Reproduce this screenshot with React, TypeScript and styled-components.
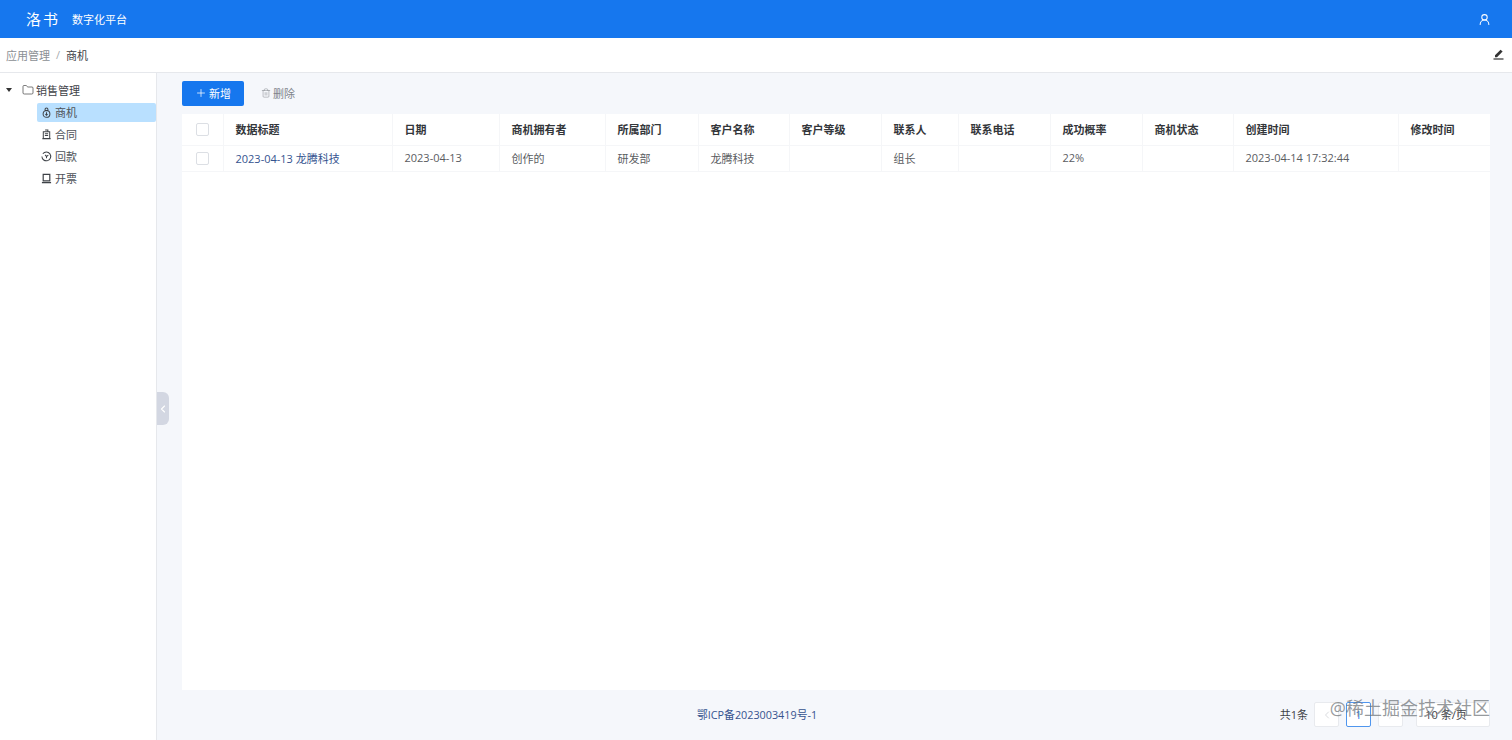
import React from 'react';
import styled, { createGlobalStyle } from 'styled-components';
import { ChevronLeft, ChevronRight, Folder, Plus, Trash2, UserRound } from 'lucide-react';

const GlobalStyle = createGlobalStyle`
  html, body { margin: 0; padding: 0; height: 100%; }
  body {
    font-family: "Open Sans", "Noto Sans CJK SC", sans-serif;
    font-size: 11px;
    color: #4e5359;
    background: #f5f7fb;
  }
  * { box-sizing: border-box; }
`;

const Page = styled.div`
  position: relative;
  display: flex;
  flex-direction: column;
  width: 1512px;
  height: 740px;
  overflow: hidden;
`;

// 顶部导航
const TopBar = styled.header`
  display: flex;
  align-items: center;
  height: 38px;
  flex: none;
  padding: 0 21px 0 26px;
  background: #1677ee;
  color: #fff;
`;

const LogoText = styled.span`
  font-size: 15px;
  letter-spacing: 2px;
  line-height: 1;
`;

const PlatformName = styled.span`
  margin-left: 12px;
  font-size: 11px;
  margin-bottom: 1px;
`;

const TopBarRight = styled.div`
  display: flex;
  margin-left: auto;
`;

const Crumbs = styled.div`
  display: flex;
  align-items: center;
  flex: none;
  height: 35px;
  padding: 0 8px 1px 6px;
  background: #fff;
  border-bottom: 1px solid #e6e8ec;
`;

const CrumbLink = styled.span`
  color: #8b8f94;
`;

const CrumbSep = styled.span`
  margin: 0 6px;
  color: #a8acb0;
`;

const CrumbCurrent = styled.span`
  color: #3e4247;
`;

const EditButton = styled.span`
  display: flex;
  margin-left: auto;
`;

const Body = styled.div`
  display: flex;
  flex: 1;
  min-height: 0;
`;

// 左侧树
const Sidebar = styled.aside`
  position: relative;
  flex: none;
  width: 157px;
  padding-top: 6px;
  background: #fff;
  border-right: 1px solid #e6e8ec;
`;

const TreeRoot = styled.div`
  display: flex;
  align-items: center;
  height: 22px;
  margin-bottom: 2px;
  padding-left: 6px;
  color: #3e4247;
`;

const Caret = styled.span`
  width: 0;
  height: 0;
  margin-right: 10px;
  border-left: 3px solid transparent;
  border-right: 3px solid transparent;
  border-top: 4px solid #333;
`;

const TreeRootLabel = styled.span`
  margin-left: 2px;
`;

const TreeItem = styled.div<{ $active?: boolean }>`
  display: flex;
  align-items: center;
  gap: 3px;
  height: 19px;
  margin: 0 0 3px 37px;
  padding: 0 0 1px 4px;
  border-radius: 2px;
  background: ${(p) => (p.$active ? '#b9e0ff' : 'transparent')};
  color: #4e5359;
`;

const CollapseHandle = styled.div`
  position: absolute;
  top: 319px;
  right: -13px;
  display: flex;
  align-items: center;
  justify-content: center;
  width: 12px;
  height: 33px;
  border-radius: 0 6px 6px 0;
  background: #d3d7e2;
  color: #fff;
`;

const Main = styled.main`
  display: flex;
  flex-direction: column;
  flex: 1;
  min-width: 0;
  padding: 8px 22px 0 25px;
`;

const Toolbar = styled.div`
  display: flex;
  align-items: center;
  flex: none;
  height: 25px;
  margin-bottom: 8px;
`;

const PrimaryButton = styled.button`
  display: flex;
  align-items: center;
  justify-content: center;
  gap: 2px;
  width: 62px;
  height: 25px;
  padding: 0 0 1px;
  border: none;
  border-radius: 2px;
  background: #1677ee;
  color: #fff;
  font: inherit;
`;

const GhostButton = styled.button`
  display: flex;
  align-items: center;
  gap: 2px;
  margin-left: 17px;
  padding: 0 0 1px;
  border: none;
  background: none;
  color: #80848a;
  font: inherit;
`;

const TableCard = styled.div`
  flex: none;
  height: 576px;
  background: #fff;
`;

const Grid = styled.table`
  width: 1308px;
  border-collapse: collapse;
  table-layout: fixed;
`;

const HeadCell = styled.th<{ $check?: boolean }>`
  height: 31px;
  padding: ${(p) => (p.$check ? '0 0 0 12px' : '0 0 1px 12px')};
  border-right: 1px solid #f5f6f8;
  border-bottom: 1px solid #f5f6f8;
  color: #33363a;
  font-weight: 700;
  text-align: left;

  &:last-child { border-right: none; }
`;

const Cell = styled.td<{ $check?: boolean }>`
  height: 26px;
  padding: ${(p) => (p.$check ? '0 0 0 12px' : '0 0 1px 12px')};
  border-right: 1px solid #f5f6f8;
  border-bottom: 1px solid #f5f6f8;
  color: #5a5c5f;

  &:last-child { border-right: none; }
`;

const CheckBox = styled.div`
  width: 13px;
  height: 13px;
  margin-left: 2px;
  border: 1px solid #dcdfe4;
  border-radius: 2px;
  background: #fff;
`;

const TitleLink = styled.a`
  color: #35538f;
`;

// 底部
const Footer = styled.footer`
  position: relative;
  display: flex;
  align-items: center;
  flex: 1;
  padding-bottom: 1px;
`;

const Filing = styled.a`
  position: absolute;
  left: 515px;
  padding-bottom: 2px;
  font-size: 10.8px;
  color: #35538f;
`;

const Pager = styled.div`
  display: flex;
  align-items: center;
  margin-left: auto;
  color: #3e4247;
`;

const PageTotal = styled.span`
  margin-right: 6px;
  padding-bottom: 2px;
`;

const PageBtn = styled.span<{ $current?: boolean }>`
  display: flex;
  align-items: center;
  justify-content: center;
  width: 25px;
  height: 25px;
  margin-right: 7px;
  border: 1px solid ${(p) => (p.$current ? '#4f96ee' : '#e8eaee')};
  border-radius: 2px;
  color: ${(p) => (p.$current ? '#1677ee' : '#c4c7cc')};
  background: #fff;
`;

const PageSize = styled.span`
  display: flex;
  align-items: center;
  justify-content: center;
  width: 74px;
  height: 25px;
  margin-left: 6px;
  padding: 0 14px 1px 0;
  border: 1px solid #e8eaee;
  border-radius: 2px;
  background: #fff;
`;

const Watermark = styled.div`
  position: absolute;
  right: 22px;
  top: 696px;
  color: rgba(110, 115, 120, 0.72);
  font-size: 18px;
  line-height: 24px;
  white-space: nowrap;
`;

const Glyph: React.FC<{ children: React.ReactNode }> = ({ children }) => (
  <svg width="11" height="11" viewBox="0 0 12 12" fill="none" stroke="#3e4247" strokeWidth="1.1">
    {children}
  </svg>
);

const columns = [
  { title: '', width: 41 },
  { title: '数据标题', width: 169 },
  { title: '日期', width: 107 },
  { title: '商机拥有者', width: 106 },
  { title: '所属部门', width: 93 },
  { title: '客户名称', width: 91 },
  { title: '客户等级', width: 92 },
  { title: '联系人', width: 77 },
  { title: '联系电话', width: 92 },
  { title: '成功概率', width: 92 },
  { title: '商机状态', width: 91 },
  { title: '创建时间', width: 165 },
  { title: '修改时间', width: 92 },
];

const row = ['2023-04-13', '创作的', '研发部', '龙腾科技', '', '组长', '', '22%', '', '2023-04-14 17:32:44', ''];

const treeItems = [
  {
    label: '商机',
    active: true,
    icon: (
      <Glyph>
        <circle cx="6" cy="7.5" r="3.7" />
        <circle cx="6" cy="2.6" r="1.6" />
        <path d="M6 5.8v3.2M4.8 7.9 6 9l1.2-1.1" />
      </Glyph>
    ),
  },
  {
    label: '合同',
    icon: (
      <Glyph>
        <path d="M2.5 3h7v7.5h-7zM4.5 1.2h3V3M1.5 10.5h9M4.2 5.2h3.6M4.2 7.2h3.6" />
      </Glyph>
    ),
  },
  {
    label: '回款',
    icon: (
      <Glyph>
        <path d="M2 3a4.8 4.8 0 1 1-1 3" />
        <path d="M4.5 4.2 6 6l2-1.6M6 6v1.8" />
      </Glyph>
    ),
  },
  {
    label: '开票',
    icon: (
      <Glyph>
        <path d="M2.4 1.5h7.2v7H2.4zM1 10.5h10" strokeWidth="1.3" />
      </Glyph>
    ),
  },
];

const App: React.FC = () => {
  return (
    <Page>
      <GlobalStyle />
      <TopBar>
        <LogoText>洛书</LogoText>
        <PlatformName>数字化平台</PlatformName>
        <TopBarRight>
          <UserRound size={13} strokeWidth={1.9} />
        </TopBarRight>
      </TopBar>
      <Crumbs>
        <CrumbLink>应用管理</CrumbLink>
        <CrumbSep>/</CrumbSep>
        <CrumbCurrent>商机</CrumbCurrent>
        <EditButton>
          <svg width="11" height="11" viewBox="0 0 11 11" fill="#333">
            <path d="M7.6.8 9.6 2.6 4 8.2H2V6.3z" />
            <rect x="0.5" y="9.4" width="10" height="1.2" />
          </svg>
        </EditButton>
      </Crumbs>
      <Body>
        <Sidebar>
          <TreeRoot>
            <Caret />
            <Folder size={12} strokeWidth={1.3} color="#333" />
            <TreeRootLabel>销售管理</TreeRootLabel>
          </TreeRoot>
          {treeItems.map((item) => (
            <TreeItem key={item.label} $active={item.active}>
              {item.icon}
              {item.label}
            </TreeItem>
          ))}
          <CollapseHandle>
            <ChevronLeft size={12} strokeWidth={2.2} />
          </CollapseHandle>
        </Sidebar>
        <Main>
          <Toolbar>
            <PrimaryButton>
              <Plus size={12} strokeWidth={1.5} />
              新增
            </PrimaryButton>
            <GhostButton>
              <Trash2 size={10} strokeWidth={1.2} />
              删除
            </GhostButton>
          </Toolbar>
          <TableCard>
            <Grid>
              <colgroup>
                {columns.map((col, i) => (
                  <col key={i} width={col.width} />
                ))}
              </colgroup>
              <thead>
                <tr>
                  {columns.map((col, i) =>
                    i === 0 ? (
                      <HeadCell key={i} $check>
                        <CheckBox />
                      </HeadCell>
                    ) : (
                      <HeadCell key={i}>{col.title}</HeadCell>
                    ),
                  )}
                </tr>
              </thead>
              <tbody>
                <tr>
                  <Cell $check>
                    <CheckBox />
                  </Cell>
                  <Cell>
                    <TitleLink>2023-04-13 龙腾科技</TitleLink>
                  </Cell>
                  {row.map((value, i) => (
                    <Cell key={i}>{value}</Cell>
                  ))}
                </tr>
              </tbody>
            </Grid>
          </TableCard>
          <Footer>
            <Filing>鄂ICP备2023003419号-1</Filing>
            <Pager>
              <PageTotal>共1条</PageTotal>
              <PageBtn>
                <ChevronLeft size={12} strokeWidth={1.3} />
              </PageBtn>
              <PageBtn $current>1</PageBtn>
              <PageBtn>
                <ChevronRight size={12} strokeWidth={1.3} />
              </PageBtn>
              <PageSize>10 条/页</PageSize>
            </Pager>
          </Footer>
        </Main>
      </Body>
      <Watermark>@稀土掘金技术社区</Watermark>
    </Page>
  );
};

export default App;
